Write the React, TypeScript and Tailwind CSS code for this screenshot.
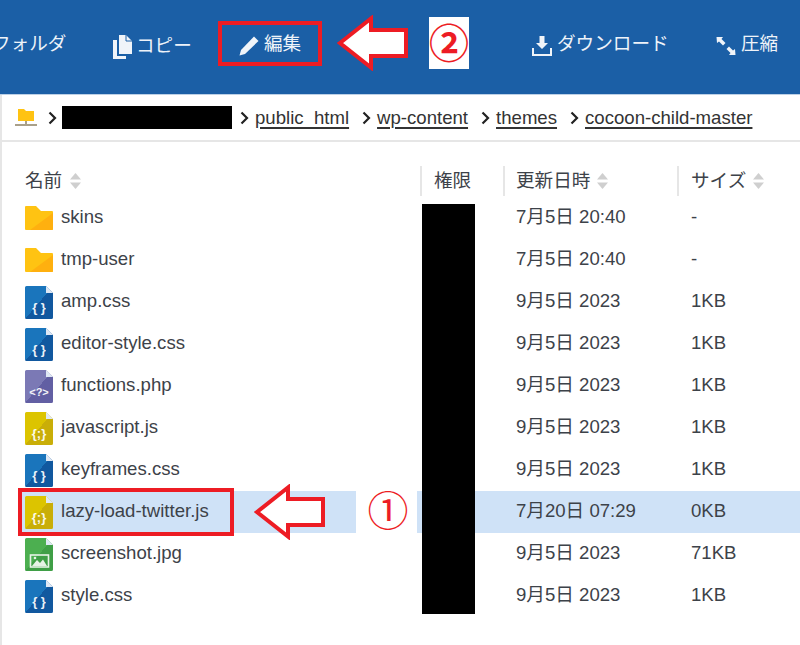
import React from "react";

const SANS = "font-['Liberation_Sans','Noto_Sans_CJK_JP',sans-serif]";

function FolderIcon() {
  return (
    <svg width="28" height="24" viewBox="0 0 28 24" className="block">
      <path d="M0 1 a1 1 0 0 1 1-1 H11 L16 5 H27 a1 1 0 0 1 1 1 V23 a1 1 0 0 1-1 1 H1 a1 1 0 0 1-1-1 Z" fill="#ffc312" />
      <path d="M28 7 V23 a1 1 0 0 1-1 1 H5 Z" fill="#ffb00f" />
    </svg>
  );
}

function FileIcon({ a, b, label, image }: { a: string; b: string; label?: string; image?: boolean }) {
  const id = `g${a.slice(1)}`;
  return (
    <svg width="28" height="33" viewBox="0 0 28 33" className="block">
      <defs>
        <linearGradient id={id} x1="0" y1="0" x2="1" y2="1">
          <stop offset="0.5" stopColor={a} />
          <stop offset="0.5" stopColor={b} />
        </linearGradient>
      </defs>
      <path d="M0 1.5 a1.5 1.5 0 0 1 1.5-1.5 H21 L28 7 V31.5 a1.5 1.5 0 0 1-1.5 1.5 H1.5 A1.5 1.5 0 0 1 0 31.5 Z" fill={`url(#${id})`} />
      <path d="M21 0 L28 7 H21 Z" fill="#dfe8f4" />
      {label && (
        <text x="14" y="26" textAnchor="middle" fontSize={label === "<?>" ? 11 : 13} fontWeight="700" fill="#ffffff" fontFamily="Liberation Sans" opacity="0.92">
          {label}
        </text>
      )}
      {image && (
        <g>
          <rect x="5.5" y="17" width="18" height="12" fill="none" stroke="#e6f3e6" strokeWidth="1.6" />
          <path d="M7 28 L12 22 L15 25 L18 21.5 L22 28 Z" fill="#e6f3e6" />
          <circle cx="10" cy="20" r="1.3" fill="#e6f3e6" />
        </g>
      )}
    </svg>
  );
}

function Sort() {
  return (
    <svg width="11" height="16" viewBox="0 0 11 16" className="block">
      <path d="M5.5 0 L11 6.5 H0 Z" fill="#cfcfcf" />
      <path d="M5.5 16 L11 9.5 H0 Z" fill="#cfcfcf" />
    </svg>
  );
}

function Chevron() {
  return (
    <svg width="9" height="14" viewBox="0 0 9 14" className="block">
      <path d="M1.5 1.5 L7 7 L1.5 12.5" fill="none" stroke="#222" strokeWidth="2.2" />
    </svg>
  );
}

function Crumb({ children }: { children: React.ReactNode }) {
  return <span className="underline decoration-2 underline-offset-[3px]">{children}</span>;
}

const css = { a: "#1a75bc", b: "#11589f", label: "{ }" };
const js = { a: "#dcc400", b: "#c9ae08", label: "{;}" };

const rows: { name: string; date: string; size: string; icon: React.ReactNode; selected?: boolean }[] = [
  { name: "skins", date: "7月5日 20:40", size: "-", icon: <FolderIcon /> },
  { name: "tmp-user", date: "7月5日 20:40", size: "-", icon: <FolderIcon /> },
  { name: "amp.css", date: "9月5日 2023", size: "1KB", icon: <FileIcon {...css} /> },
  { name: "editor-style.css", date: "9月5日 2023", size: "1KB", icon: <FileIcon {...css} /> },
  { name: "functions.php", date: "9月5日 2023", size: "1KB", icon: <FileIcon a="#7b79b5" b="#625fa3" label="<?>" /> },
  { name: "javascript.js", date: "9月5日 2023", size: "1KB", icon: <FileIcon {...js} /> },
  { name: "keyframes.css", date: "9月5日 2023", size: "1KB", icon: <FileIcon {...css} /> },
  { name: "lazy-load-twitter.js", date: "7月20日 07:29", size: "0KB", icon: <FileIcon {...js} />, selected: true },
  { name: "screenshot.jpg", date: "9月5日 2023", size: "71KB", icon: <FileIcon a="#4caf50" b="#3f9f46" image /> },
  { name: "style.css", date: "9月5日 2023", size: "1KB", icon: <FileIcon {...css} /> },
];

const grid = "grid grid-cols-[400px_83px_174px_1fr]";

function Arrow({ className }: { className: string }) {
  return (
    <svg width="72" height="56" viewBox="0 0 72 56" className={className}>
      <path d="M3 28 L34 3.500 V15 H69 V41 H34 V52.500 Z" fill="#ffffff" stroke="#ed1c24" strokeWidth="4" strokeLinejoin="miter" />
    </svg>
  );
}

export default function App() {
  return (
    <div className={`${SANS} relative w-[800px] h-[645px] overflow-hidden bg-white text-[18.6px] text-[#3d4249]`}>
      <div className="flex items-start h-[95px] bg-[#1b5fa6] border-b border-[#bcd0e6] text-[#eef3f9] text-[18.6px] pt-[32px] leading-[24px]">
        <span className="ml-[-8px] w-[121px] shrink-0 whitespace-nowrap">フォルダ</span>
        <div className="flex items-center gap-[5px] w-[126px] shrink-0">
          <svg width="19" height="24" viewBox="0 0 19 24" className="mt-[3px]">
            <path d="M6 0 H13 L19 6 V19 H6 Z" fill="#f0f4f9" />
            <path d="M13 0 V6 H19" fill="none" stroke="#1b5fa6" strokeWidth="1" />
            <path d="M0 5 H4 V21 H13 V24 H0 Z" fill="#f0f4f9" />
          </svg>
          <span className="ml-[-1px]">コピー</span>
        </div>
        <div className="flex items-center gap-[5px] w-[293px] shrink-0">
          <svg width="20" height="20" viewBox="0 0 20 20" className="mt-[4px]">
            <path d="M15 0.500 L19.500 5 L6 18 L0.500 19.500 L2 14 Z" fill="#f0f4f9" />
          </svg>
          <span>編集</span>
        </div>
        <div className="flex items-center gap-[5px] w-[184px] shrink-0">
          <svg width="20" height="20" viewBox="0 0 20 20" className="mt-[4px]">
            <path d="M7.500 0 H12.500 V7 H16 L10 13 L4 7 H7.500 Z" fill="#f0f4f9" />
            <path d="M1 12 V19 H19 V12" fill="none" stroke="#f0f4f9" strokeWidth="2" />
          </svg>
          <span>ダウンロード</span>
        </div>
        <div className="flex items-center gap-[5px] shrink-0">
          <svg width="20" height="20" viewBox="0 0 20 20" className="mt-[4px]">
            <path d="M0.500 1 H7 L5.500 3 L9.500 7 L7 9.500 L3 5.500 L1 7 Z" fill="#f0f4f9" />
            <path d="M19.500 19 H13 L14.500 17 L10.500 13 L13 10.500 L17 14.500 L19 13 Z" fill="#f0f4f9" />
          </svg>
          <span>圧縮</span>
        </div>
      </div>

      <div className="h-[550px] border-l-2 border-[#e6e6e6]">
        <div className="flex items-center h-[47px] border-b-2 border-[#e6e6e6] pl-[13px] text-[#333]">
          <svg width="22" height="20" viewBox="0 0 22 20" className="mr-[11px]">
            <path d="M3 1 H9 L11 3 H19 V13 H3 Z" fill="#ffc312" />
            <rect x="0" y="16" width="22" height="2" fill="#a9a08a" />
            <rect x="10" y="13" width="2" height="4" fill="#a9a08a" />
          </svg>
          <div className="mr-[5px]"><Chevron /></div>
          <div className="w-[170px] h-[23px] bg-black mr-[8px]" />
          <div className="mr-[6px]"><Chevron /></div>
          <Crumb>public_html</Crumb>
          <div className="ml-[13px] mr-[6px]"><Chevron /></div>
          <Crumb>wp-content</Crumb>
          <div className="ml-[13px] mr-[6px]"><Chevron /></div>
          <Crumb>themes</Crumb>
          <div className="ml-[13px] mr-[6px]"><Chevron /></div>
          <Crumb>cocoon-child-master</Crumb>
        </div>

        <div className="ml-[18px] pt-[23px]">
          <div className={`${grid} h-[32px] items-center`}>
            <div className="flex items-center gap-[8px] pl-[5px]">
              <span>名前</span>
              <Sort />
            </div>
            <div className="h-[30px] flex items-center border-l-2 border-[#e6e6e6] pl-[12px]">権限</div>
            <div className="h-[30px] flex items-center gap-[7px] border-l-2 border-[#e6e6e6] pl-[11px]">
              <span>更新日時</span>
              <Sort />
            </div>
            <div className="h-[30px] flex items-center gap-[7px] border-l-2 border-[#e6e6e6] pl-[12px]">
              <span>サイズ</span>
              <Sort />
            </div>
          </div>
          {rows.map((r) => (
            <div key={r.name} className={`${grid} h-[42px] items-center ${r.selected ? "bg-[#cfe2f7]" : ""}`}>
              <div className="flex items-center gap-[8px] pl-[5px]">
                {r.icon}
                <span className="mb-[2px]">{r.name}</span>
              </div>
              <div />
              <div className="pl-[13px] mb-[2px]">{r.date}</div>
              <div className="pl-[14px] mb-[2px]">{r.size}</div>
            </div>
          ))}
        </div>
      </div>

      <div className="absolute left-[422px] top-[204px] w-[53px] h-[410px] bg-black" />
      <div className="absolute left-[218px] top-[21px] w-[104px] h-[45px] border-4 border-[#ed1c24]" />
      <Arrow className="absolute left-[337px] top-[15px]" />
      <div className="absolute left-[429px] top-[17px] w-[40px] h-[52px] bg-white flex items-center justify-center text-[#ed1c24] text-[40px] font-bold leading-none pt-[2px]">②</div>
      <div className="absolute left-[18px] top-[488px] w-[216px] h-[48px] border-4 border-[#ed1c24]" />
      <Arrow className="absolute left-[254px] top-[484px]" />
      <div className="absolute left-[356px] top-[491px] w-[61px] h-[42px] bg-white flex items-center justify-center text-[#ed1c24] text-[41px] leading-none pl-[3px]">①</div>
    </div>
  );
}
